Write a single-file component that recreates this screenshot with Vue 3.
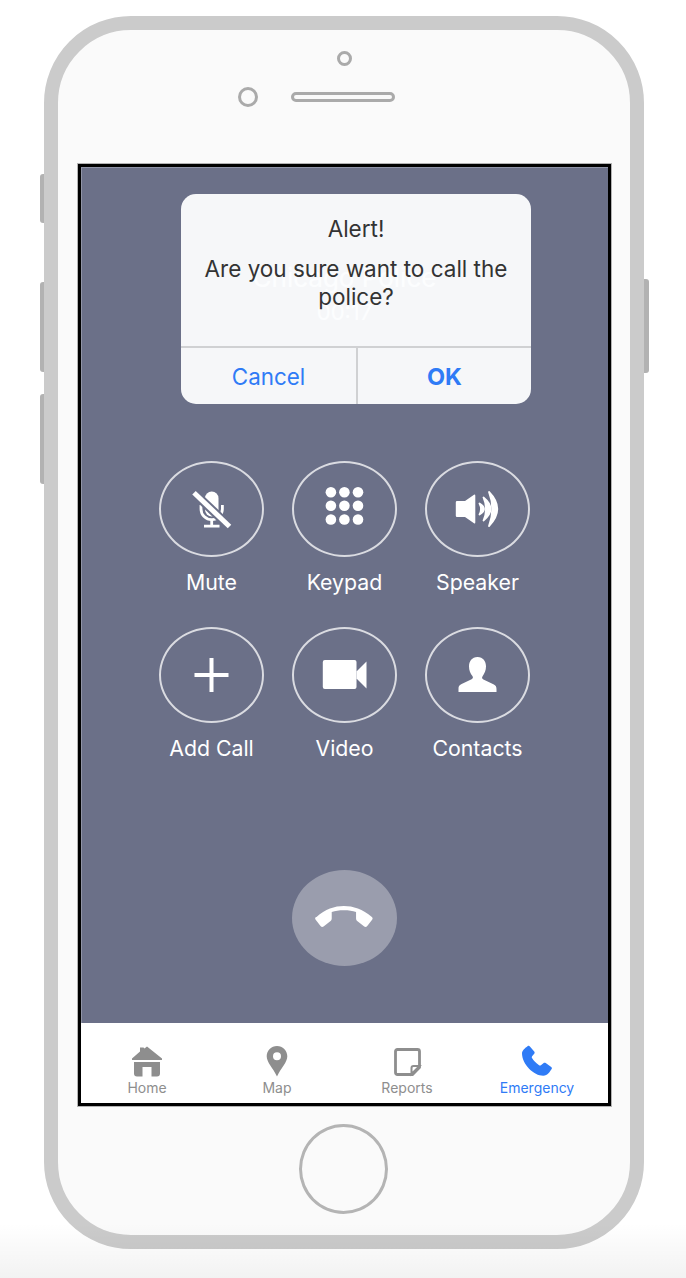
<script setup>
const rows = [
  [{ key: 'mute', label: 'Mute' }, { key: 'keypad', label: 'Keypad' }, { key: 'speaker', label: 'Speaker' }],
  [{ key: 'add', label: 'Add Call' }, { key: 'video', label: 'Video' }, { key: 'contacts', label: 'Contacts' }],
]
const dots = [8.2, 21.8, 35.5].flatMap((y) => [10.9, 24.4, 38].map((x) => ({ x, y })))
</script>

<template>
  <div class="page">
    <div class="phone">
      <span class="side side-a"></span>
      <span class="side side-b"></span>
      <span class="side side-c"></span>
      <span class="side side-d"></span>

      <div class="phone-top">
        <span class="camera"></span>
        <div class="sensors">
          <span class="sensor"></span>
          <span class="earpiece"></span>
        </div>
      </div>

      <div class="screen">
        <div class="call">
          <div class="name">Chicago Police</div>
          <div class="timer">00:17</div>

          <div class="actions">
            <template v-for="row in rows" :key="row[0].key">
              <div v-for="item in row" :key="item.key" class="action">
                <div class="ring">
                  <svg viewBox="0 0 50 50" width="50" height="50">
                    <g v-if="item.key === 'mute'">
                      <rect x="18" y="7.500" width="13.500" height="25" rx="6.700" fill="#fff" />
                      <path d="M14 21v4a10.700 10.700 0 0 0 21.400 0v-4" fill="none" stroke="#fff" stroke-width="2.800" />
                      <path d="M24.700 36v6M17 42.200h15.500" fill="none" stroke="#fff" stroke-width="2.800" />
                      <path d="M5.500 7.500 43.500 43.500" stroke="#6b7088" stroke-width="9" />
                      <path d="M7 8.800 42.500 42.500" stroke="#fff" stroke-width="5" />
                    </g>
                    <g v-else-if="item.key === 'keypad'">
                      <circle v-for="(d, i) in dots" :key="i" :cx="d.x" :cy="d.y" r="5.300" fill="#fff" />
                    </g>
                    <g v-else-if="item.key === 'speaker'">
                      <path d="M4 17h8l9-6.200q1.300-.7 1.300 1v26.400q0 1.700-1.300 1L12 33H4q-1.200 0-1.200-1.200V18.200Q2.800 17 4 17z" fill="#fff" />
                      <path d="M26.500 19.500Q35.500 25 26.500 30.500 29.500 25 26.500 19.500z" fill="#fff" stroke="#fff" stroke-width="1.800" stroke-linejoin="round" />
                      <path d="M30.500 13.500Q44.500 25 30.500 36.500 35.500 25 30.500 13.500z" fill="#fff" stroke="#fff" stroke-width="1.800" stroke-linejoin="round" />
                      <path d="M36 8Q52.500 25 36 42 42.500 25 36 8z" fill="#fff" stroke="#fff" stroke-width="1.800" stroke-linejoin="round" />
                    </g>
                    <g v-else-if="item.key === 'add'">
                      <path d="M7.500 25h34M24.500 8v34" stroke="#fff" stroke-width="4" />
                    </g>
                    <g v-else-if="item.key === 'video'">
                      <rect x="2.800" y="10" width="33.700" height="29" rx="2" fill="#fff" />
                      <path d="M36.500 21.500 46.500 11.500v27l-10-10z" fill="#fff" />
                    </g>
                    <g v-else>
                      <path d="M24.500 7c5.600 0 8.500 4.400 8.500 9.300 0 4-1.500 7.400-3.400 9.900-.9 1.200-.7 2.500.8 3.200l10 4.800c2.600 1.300 3.100 2.600 3.100 5V42H5.500v-3c0-2.400.5-3.700 3.100-4.900l10-4.800c1.500-.7 1.700-2 .8-3.200-2-2.500-3.400-5.900-3.400-9.900C16 11.400 18.900 7 24.500 7z" fill="#fff" />
                    </g>
                  </svg>
                </div>
                <div class="action-label">{{ item.label }}</div>
              </div>
            </template>
          </div>

          <div class="hangup">
            <svg viewBox="0 1.500 60 30" width="73" height="36.500">
              <path d="M7 15.500C14 9 22 6.500 29.500 6.500S45 9 52.500 15.500c.8.700.8 1.500.2 2.200l-4 5.200c-.7.900-1.700 1-2.500.4l-5.500-4.300c-.8-.6-1.200-1.300-1.200-2.300v-5.300c-3-1-5.800-1.400-10-1.400s-7 .4-10 1.400v5.300c0 1-.4 1.700-1.200 2.300l-5.500 4.300c-.8.600-1.800.5-2.500-.4l-4-5.200c-.6-.7-.6-1.500.2-2.200z" fill="#fff" />
            </svg>
          </div>

          <div class="dialog">
            <div class="dialog-body">
              <div class="dialog-title">Alert!</div>
              <div class="dialog-text">Are you sure want to call the police?</div>
            </div>
            <div class="dialog-buttons">
              <div class="dialog-btn">Cancel</div>
              <div class="dialog-btn strong">OK</div>
            </div>
          </div>
        </div>

        <div class="tabs">
          <div class="tab">
            <svg viewBox="0 0 32 32" width="32" height="32">
              <path d="M1 13.500 9 6.500V2.500h3.500l1 1L16 1.500 31 13.500v1.500H1z" fill="#8e8e8e" />
              <path d="M3 17h26v11.500q0 3-3 3h-5.500V22h-9v9.500H6q-3 0-3-3z" fill="#8e8e8e" />
              <path d="M12 25h8v7h-8z" fill="#fff" />
            </svg>
            <span>Home</span>
          </div>
          <div class="tab">
            <svg viewBox="0 0 32 32" width="32" height="32">
              <path fill-rule="evenodd" d="M16 1C21.700 1 26.300 5.600 26.300 11.300 26.300 17.500 20 23 16 31.500 12 23 5.700 17.500 5.700 11.300 5.700 5.600 10.300 1 16 1zM16 7.300a4 4 0 1 0 0 8 4 4 0 0 0 0-8z" fill="#8e8e8e" />
            </svg>
            <span>Map</span>
          </div>
          <div class="tab">
            <svg viewBox="0 0 32 32" width="32" height="32">
              <path d="M6.500 4.500h20q2 0 2 2v16l-7 7H6.500q-2 0-2-2v-21q0-2 2-2z" fill="none" stroke="#8e8e8e" stroke-width="2.800" />
              <path d="M20.500 29v-6q0-2 2-2h6z" fill="none" stroke="#8e8e8e" stroke-width="2" />
            </svg>
            <span>Reports</span>
          </div>
          <div class="tab active">
            <svg viewBox="0 0 32 32" width="32" height="32">
              <path d="M6.500 1.200c.8-.6 1.700-.5 2.400.2l4.300 5c.6.700.6 1.600 0 2.300l-2.100 2.500c-.5.600-.5 1.200-.1 1.900 1.600 2.600 4 5.200 7.100 7.200.6.400 1.200.4 1.800-.1l2.500-2c.7-.6 1.500-.6 2.300-.1l5.500 3.800c.8.600.9 1.500.3 2.300-1.400 2-3.800 6.500-8.300 6.500C13 30.700 1 19.500 1 8.200c0-2.800 3.400-5.400 5.500-7z" fill="#2f7bf6" />
            </svg>
            <span>Emergency</span>
          </div>
        </div>
      </div>

      <div class="home-btn"></div>
    </div>
    <div class="fade"></div>
  </div>
</template>

<style scoped>
.page {
  position: relative;
  width: 686px;
  height: 1278px;
  padding: 16px 0 0 44px;
  box-sizing: border-box;
  overflow: hidden;
  background: #fff;
  font-family: Inter, "Liberation Sans", sans-serif;
}
.phone {
  position: relative;
  width: 600px;
  height: 1233px;
  box-sizing: border-box;
  border: 14px solid #cbcbcb;
  border-radius: 87px;
  background: #fafafa;
}
.side {
  position: absolute;
  background: #b2b2b2;
}
.side-a, .side-b, .side-c {
  left: -18px;
  width: 4px;
  border-radius: 3px 0 0 3px;
}
.side-a { top: 144px; height: 49px; }
.side-b { top: 252px; height: 90px; }
.side-c { top: 364px; height: 90px; }
.side-d {
  left: 586px;
  top: 249px;
  width: 5px;
  height: 94px;
  border-radius: 0 3px 3px 0;
}
.phone-top {
  height: 134px;
  box-sizing: border-box;
  padding-top: 21px;
}
.camera {
  display: block;
  width: 15px;
  height: 15px;
  margin: 0 auto;
  box-sizing: border-box;
  border: 3px solid #aaa;
  border-radius: 50%;
}
.sensors {
  display: flex;
  align-items: center;
  gap: 33px;
  margin-top: 21px;
  padding-left: 180px;
}
.sensor {
  width: 20px;
  height: 20px;
  box-sizing: border-box;
  border: 3px solid #aaa;
  border-radius: 50%;
}
.earpiece {
  width: 104px;
  height: 10px;
  box-sizing: border-box;
  border: 3px solid #aaa;
  border-radius: 5px;
}
.screen {
  display: flex;
  flex-direction: column;
  width: 533px;
  height: 942px;
  margin-left: 20px;
  box-sizing: border-box;
  border: 3px solid #000;
  outline: 1px solid rgba(120, 120, 120, 0.55);
  background: #fff;
}
.call {
  position: relative;
  flex: 1;
  display: flex;
  flex-direction: column;
  align-items: center;
  padding-top: 96px;
  box-sizing: border-box;
  background: #6b7088;
  box-shadow: inset 1px 1px 0 rgba(255, 255, 255, 0.25);
  color: #fff;
}
.name {
  font-size: 26px;
  line-height: 30px;
}
.timer {
  margin-top: 7px;
  font-size: 22px;
  line-height: 24px;
}
.actions {
  display: grid;
  grid-template-columns: repeat(3, 105px);
  grid-auto-rows: 166px;
  column-gap: 28px;
  margin-top: 137px;
}
.action {
  display: flex;
  flex-direction: column;
  align-items: center;
}
.ring {
  display: flex;
  align-items: center;
  justify-content: center;
  width: 105px;
  height: 96px;
  box-sizing: border-box;
  border: 2px solid rgba(255, 255, 255, 0.75);
  border-radius: 50%;
}
.action-label {
  margin-top: 13px;
  font-size: 21.300px;
  line-height: 24px;
  white-space: nowrap;
}
.hangup {
  display: flex;
  align-items: center;
  justify-content: center;
  width: 105px;
  height: 96px;
  margin-top: 77px;
  border-radius: 50%;
  background: #9a9dad;
}
.dialog {
  position: absolute;
  top: 27px;
  left: 100px;
  display: flex;
  flex-direction: column;
  width: 350px;
  height: 210px;
  border-radius: 15px;
  overflow: hidden;
  background: rgba(252, 253, 254, 0.96);
  color: #333;
}
.dialog-body {
  flex: 1;
  padding: 21px 20px 0;
  text-align: center;
  font-size: 22.500px;
  line-height: 28px;
}
.dialog-text {
  margin-top: 12px;
}
.dialog-buttons {
  display: grid;
  grid-template-columns: 177px 1fr;
  height: 58px;
  border-top: 2px solid #d0d1d3;
  box-sizing: border-box;
}
.dialog-btn {
  display: flex;
  align-items: center;
  justify-content: center;
  font-size: 22.400px;
  color: #2f7bf6;
}
.dialog-btn:first-child {
  border-right: 2px solid #d0d1d3;
}
.strong {
  font-size: 23.500px;
  font-weight: 700;
}
.tabs {
  display: grid;
  grid-template-columns: repeat(4, 130px);
  height: 80px;
  padding: 0 6px 0 1px;
  background: #fff;
}
.tab {
  display: flex;
  flex-direction: column;
  align-items: center;
  padding-top: 22px;
  box-sizing: border-box;
  color: #8e8e8e;
  font-size: 14px;
  line-height: 18px;
}
.tab span {
  margin-top: 2px;
}
.tab svg {
  display: block;
}
.tab.active {
  color: #2f7bf6;
}
.home-btn {
  width: 89px;
  height: 90px;
  margin: 18px 0 0 241px;
  box-sizing: border-box;
  border: 3px solid #b4b4b4;
  border-radius: 50%;
}
.fade {
  position: absolute;
  left: 0;
  right: 0;
  bottom: 0;
  height: 55px;
  background: linear-gradient(rgba(0, 0, 0, 0), rgba(0, 0, 0, 0.05));
  pointer-events: none;
}
</style>
